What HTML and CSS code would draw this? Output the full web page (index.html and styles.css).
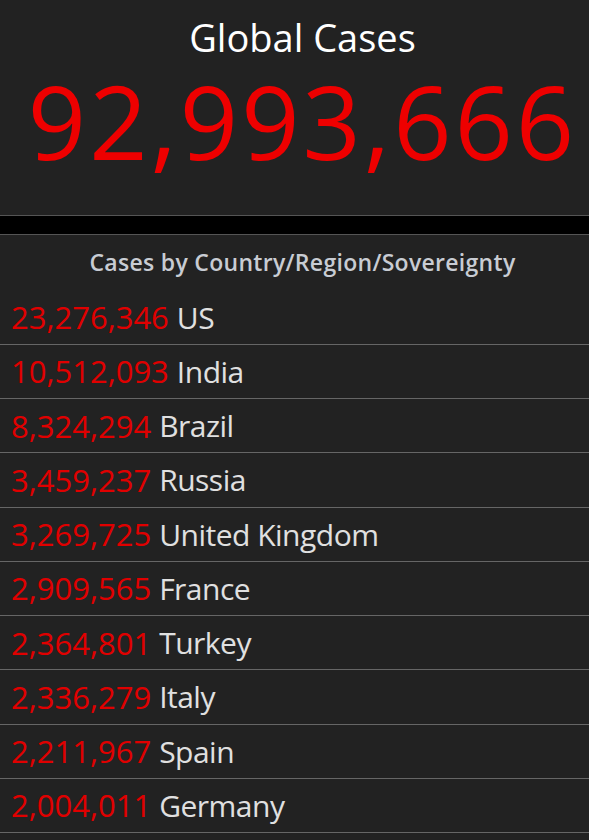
FILE: index.html
```html
<!DOCTYPE html>
<html>
<head>
<meta charset="utf-8">
<link rel="stylesheet" href="styles.css">
</head>
<body>
<section class="hero">
  <h1 class="hero-title">Global Cases</h1>
  <div class="hero-value">92,993,666</div>
</section>
<div class="gap"></div>
<section class="list">
  <h2 class="list-title">Cases by Country/Region/Sovereignty</h2>
  <ul class="rows">
    <li class="row"><span class="num">23,276,346</span> <span class="name">US</span></li>
    <li class="row"><span class="num">10,512,093</span> <span class="name">India</span></li>
    <li class="row"><span class="num">8,324,294</span> <span class="name">Brazil</span></li>
    <li class="row"><span class="num">3,459,237</span> <span class="name">Russia</span></li>
    <li class="row"><span class="num">3,269,725</span> <span class="name">United Kingdom</span></li>
    <li class="row"><span class="num">2,909,565</span> <span class="name">France</span></li>
    <li class="row"><span class="num">2,364,801</span> <span class="name">Turkey</span></li>
    <li class="row"><span class="num">2,336,279</span> <span class="name">Italy</span></li>
    <li class="row"><span class="num">2,211,967</span> <span class="name">Spain</span></li>
    <li class="row"><span class="num">2,004,011</span> <span class="name">Germany</span></li>
  </ul>
</section>
</body>
</html>
```
FILE: styles.css
```css
html, body {
  margin: 0;
  padding: 0;
  background: #222222;
  font-family: "Open Sans", "Noto Sans", sans-serif;
  overflow: hidden;
}
.hero {
  height: 215px;
  box-sizing: border-box;
  padding-top: 15px;
  padding-left: 16px;
  text-align: center;
  white-space: nowrap;
}
.hero-title {
  margin: 0;
  font-weight: 400;
  font-size: 38px;
  line-height: 44px;
  color: #ffffff;
}
.hero-value {
  margin-top: 10px;
  font-size: 102px;
  line-height: 104px;
  font-weight: 500;
  letter-spacing: 3px;
  color: #ee0000;
}
.gap {
  height: 18px;
  background: #000000;
  border-top: 1px solid #555555;
  border-bottom: 1px solid #555555;
}
.list-title {
  margin: 0;
  padding-top: 12px;
  padding-left: 16px;
  height: 55.5px;
  box-sizing: border-box;
  text-align: center;
  font-size: 23px;
  line-height: 30px;
  font-weight: 600;
  letter-spacing: 0.3px;
  color: #c8ccd3;
  white-space: nowrap;
}
.rows {
  list-style: none;
  margin: 0;
  padding: 0;
}
.row {
  height: 53.25px;
  border-bottom: 1px solid #666666;
  padding-left: 11px;
  display: flex;
  align-items: center;
  gap: 8px;
  font-size: 31px;
  white-space: nowrap;
}
.num {
  color: #e00000;
}
.name {
  color: #e0e0e0;
  font-size: 30px;
  letter-spacing: -0.5px;
}
```
